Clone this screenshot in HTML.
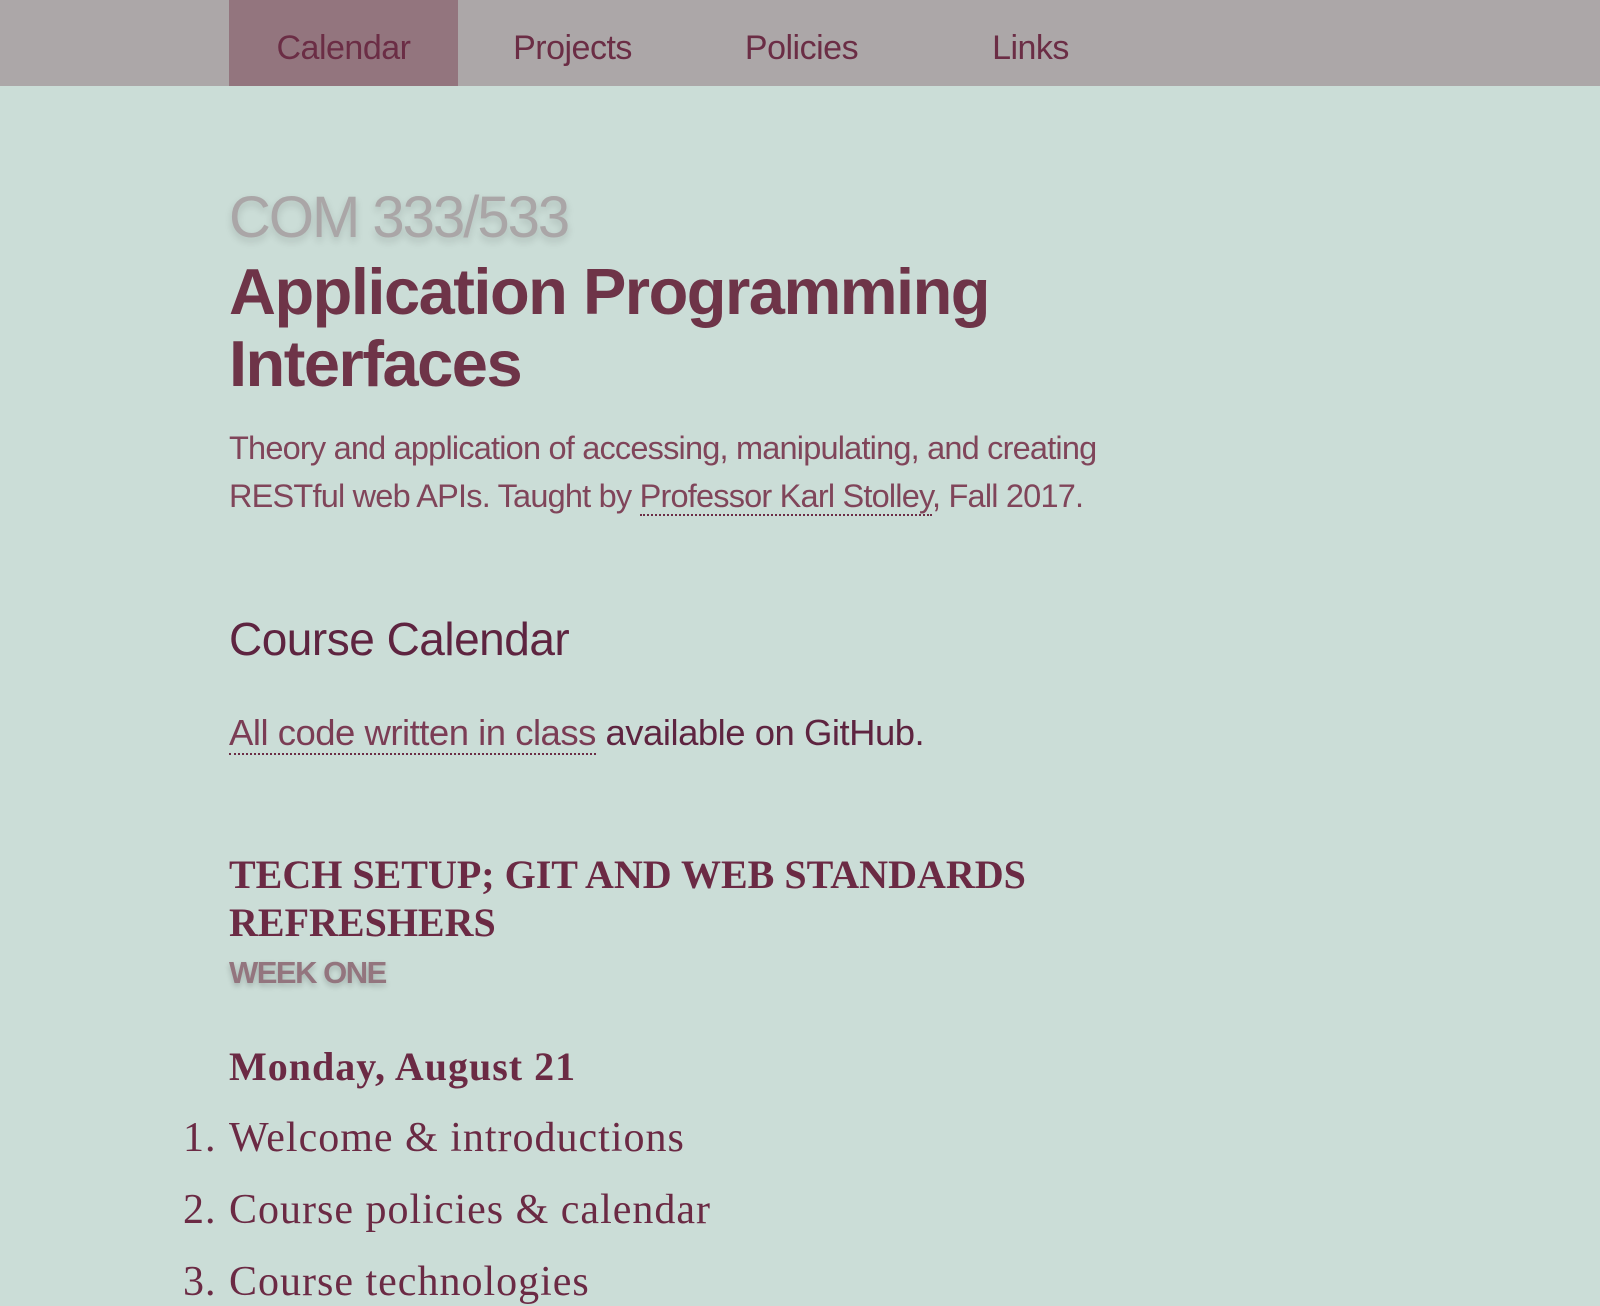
<!DOCTYPE html>
<html><head><meta charset="utf-8"><style>
html,body{margin:0;padding:0}
body{width:1600px;height:1280px;overflow:hidden;background:#cbddd7;position:relative;font-family:"Liberation Sans",sans-serif;color:#6b2d45}
nav{position:absolute;left:0;top:0;width:1600px;height:86px;background:#aca7a8}
nav a{position:absolute;top:0;height:86px;width:229px;line-height:96px;text-align:center;font-size:34px;color:#6b2d45;text-decoration:none;letter-spacing:-0.5px}
.t{position:absolute;left:229px;white-space:nowrap;margin:0}
.serif{font-family:"Liberation Serif",serif}
u{text-decoration:none;border-bottom:2px dotted #6b2d45}
.n{position:absolute;left:-46px}
</style></head><body>
<nav>
<a style="left:229px;background:#93757e">Calendar</a>
<a style="left:458px">Projects</a>
<a style="left:687px">Policies</a>
<a style="left:916px">Links</a>
</nav>
<div class="t" style="top:184px;font-size:58px;color:#aaa6a7;text-shadow:0 4px 8px rgba(0,0,0,.15);letter-spacing:-2px">COM 333/533</div>
<div class="t" style="top:256px;font-size:65px;font-weight:bold;color:#6e3448;line-height:72px;letter-spacing:-1.5px">Application Programming<br>Interfaces</div>
<div class="t" style="top:424px;font-size:32.5px;line-height:48px;color:#80455a;letter-spacing:-0.8px">Theory and application of accessing, manipulating, and creating<br>RESTful web APIs. Taught by <u>Professor Karl Stolley</u>, Fall 2017.</div>
<div class="t" style="top:612px;font-size:46px;color:#5e2440;letter-spacing:-0.5px">Course Calendar</div>
<div class="t" style="top:712px;font-size:36.5px;color:#5e2440;letter-spacing:-0.5px"><u style="color:#7b3d55">All code written in class</u> available on GitHub.</div>
<div class="t serif" style="top:851px;font-size:40px;font-weight:bold;line-height:48px;color:#6b2a44">TECH SETUP; GIT AND WEB STANDARDS<br>REFRESHERS</div>
<div class="t" style="top:955px;font-size:31px;font-weight:bold;color:#93757e;text-shadow:0 3px 6px rgba(0,0,0,.2);letter-spacing:-1.5px">WEEK ONE</div>
<div class="t serif" style="top:1043px;font-size:40px;font-weight:bold;color:#6b2a44;letter-spacing:1px">Monday, August 21</div>
<div class="t serif" style="top:1114px;font-size:42px;color:#6b2a44;letter-spacing:1px"><span class="n">1.</span>Welcome &amp; introductions</div>
<div class="t serif" style="top:1186px;font-size:42px;color:#6b2a44;letter-spacing:1px"><span class="n">2.</span>Course policies &amp; calendar</div>
<div class="t serif" style="top:1258px;font-size:42px;color:#6b2a44;letter-spacing:1px"><span class="n">3.</span>Course technologies</div>
</body></html>
